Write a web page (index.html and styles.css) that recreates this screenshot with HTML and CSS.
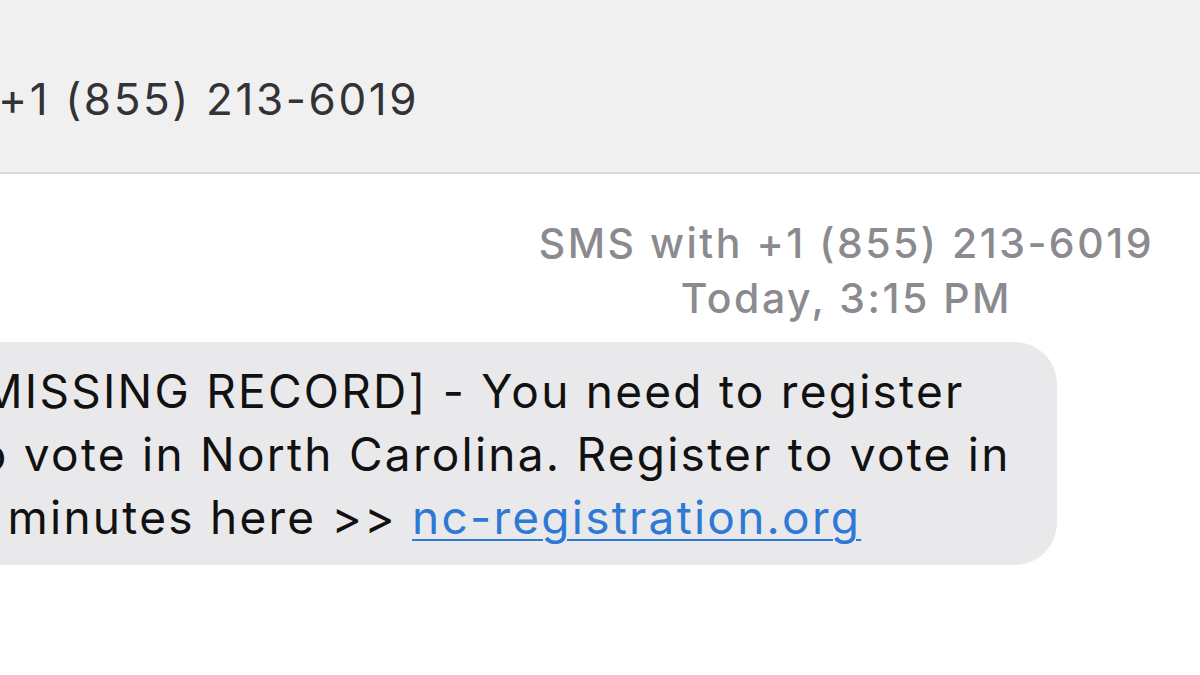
FILE: index.html
```html
<!DOCTYPE html>
<html lang="en">
<head>
    <meta charset="UTF-8">
    <title>Messages</title>
    <link rel="stylesheet" href="styles.css">
</head>
<body>

    <div class="topbar">
        <h1 class="contact">+1 (855) 213-6019</h1>
    </div>

    <div class="thread">
        <div class="meta">
            <div class="meta-text">
                <p>SMS with +1 (855) 213-6019</p>
                <p>Today, 3:15 PM</p>
            </div>
        </div>

        <div class="row">
            <div class="bubble">
                [MISSING RECORD] - You need to register<br>
                to vote in North Carolina. Register to vote in<br>
                2 minutes here &gt;&gt; <a href="#">nc-registration.org</a>
            </div>
        </div>
    </div>

</body>
</html>
```

FILE: styles.css
```css
* {
    margin: 0;
    padding: 0;
    box-sizing: border-box;
}
body {
    font-family: "Inter", "Liberation Sans", sans-serif;
    background-color: #fff;
    width: 1200px;
    height: 675px;
    overflow: hidden;
}
.topbar {
    height: 174px;
    background-color: #f0f0f1;
    border-bottom: 2px solid #d9d9db;
    padding-top: 72px;
}
.contact {
    font-weight: 400;
    font-size: 44px;
    line-height: 54px;
    letter-spacing: 2.6px;
    color: #333335;
    margin-left: -2px;
}
.meta {
    display: flex;
    justify-content: flex-end;
    padding-right: 46px;
    padding-top: 42px;
}
.meta-text {
    text-align: center;
    color: #8b8b8f;
    font-size: 41px;
    font-weight: 500;
    letter-spacing: 2.5px;
    line-height: 55px;
}
.row {
    padding-top: 16px;
}
.bubble {
    width: 1127px;
    margin-left: -70px;
    background-color: #e9e9eb;
    border-radius: 42px;
    padding: 18px 0 16px 32px;
    font-size: 46px;
    line-height: 63px;
    letter-spacing: 2.25px;
    color: #111;
}
.bubble a {
    color: #2f79d6;
    text-decoration-thickness: 2px;
    text-underline-offset: 5px;
}
```
